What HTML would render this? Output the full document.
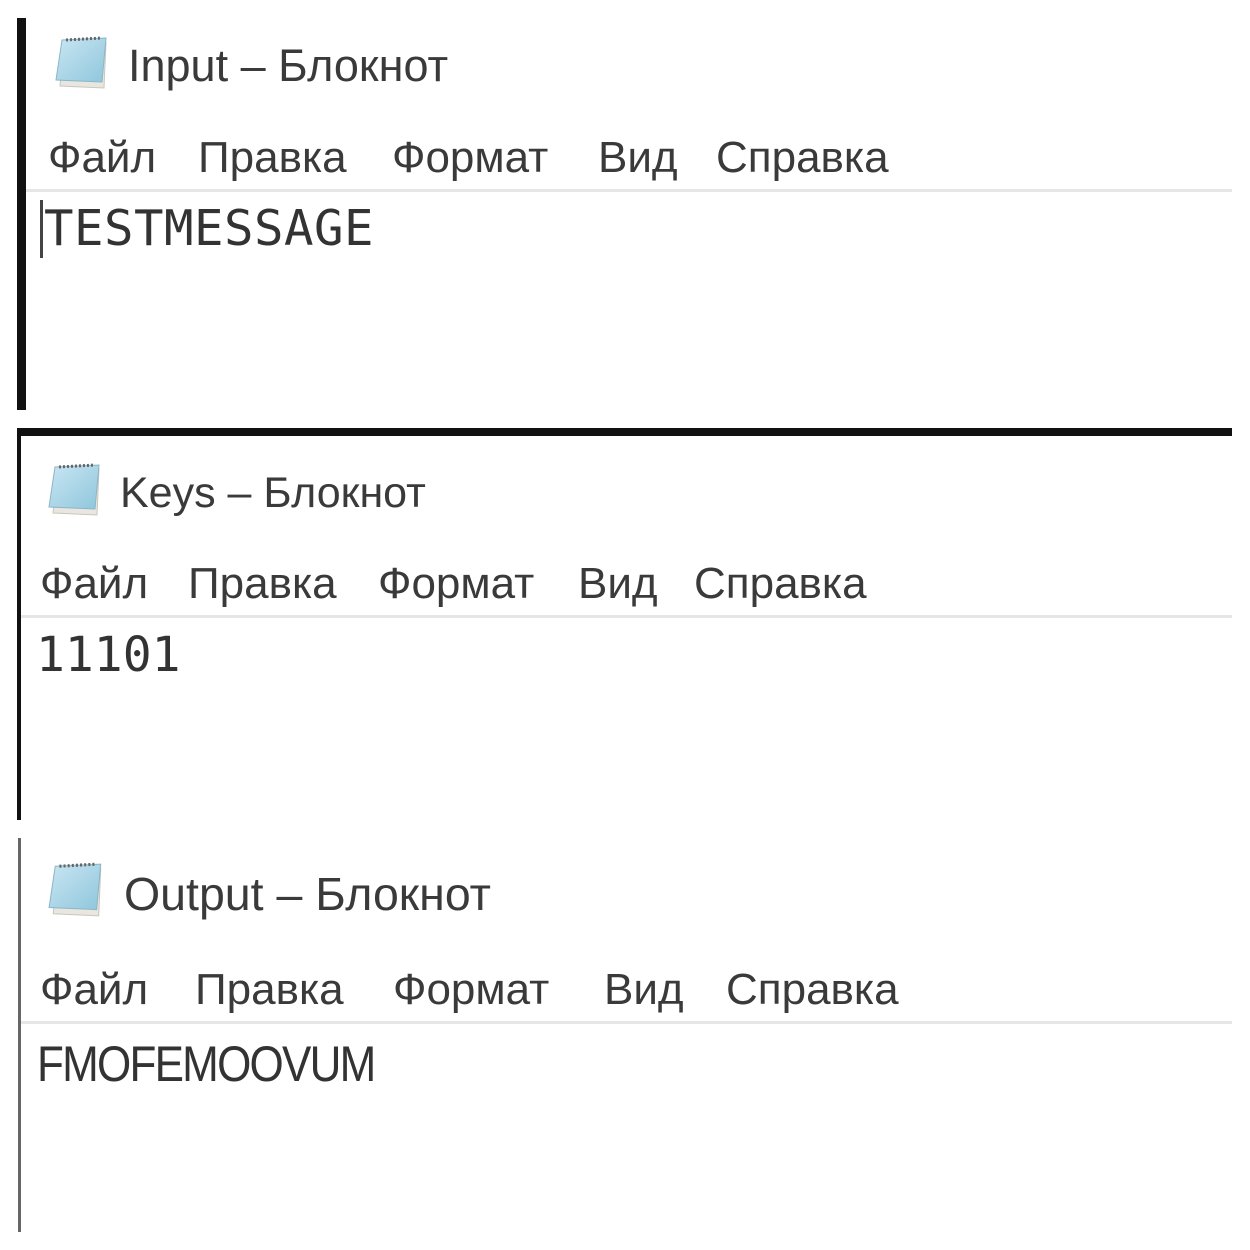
<!DOCTYPE html>
<html><head><meta charset="utf-8"><style>
html,body{margin:0;padding:0;width:1250px;height:1250px;background:#fff;overflow:hidden;position:relative;font-family:"Liberation Sans","DejaVu Sans",sans-serif;color:#3a3a3a}
.a{position:absolute;white-space:nowrap}
.t{font-size:45px;line-height:1}
.m{font-size:44px;line-height:1}
.mono{font-family:"DejaVu Sans Mono","Liberation Mono",monospace;font-size:49px;line-height:1;color:#333}
.line{position:absolute;height:3px;background:#e6e6e6}
.ic{position:absolute}
</style></head><body>
<svg width="0" height="0" style="position:absolute"><defs>
<linearGradient id="g" x1="0" y1="0" x2="1" y2="1"><stop offset="0" stop-color="#c9e6f3"/><stop offset="1" stop-color="#8fc6dc"/></linearGradient></defs></svg>

<!-- Panel 1 -->
<div class="a" style="left:17px;top:18px;width:9px;height:392px;background:#111"></div>
<svg class="ic" style="left:54px;top:34px" width="60" height="58" viewBox="0 0 60 58">
<path d="M6 52 L10 10 L52 8 L50 54 Z" fill="#e8e6df" stroke="#c9c6bd"/>
<path d="M2 46 L8 6 L52 4 L48 48 Z" fill="url(#g)" stroke="#8bb6c8"/>
<path d="M12 6 L48 4" stroke="#666" stroke-width="3" stroke-dasharray="2 2"/>
</svg>
<div class="a t" style="left:128px;top:43px">Input – Блокнот</div>
<div class="a m" style="left:48px;top:136px">Файл</div>
<div class="a m" style="left:198px;top:136px">Правка</div>
<div class="a m" style="left:392px;top:136px">Формат</div>
<div class="a m" style="left:598px;top:136px">Вид</div>
<div class="a m" style="left:716px;top:136px">Справка</div>
<div class="line" style="left:26px;top:189px;width:1206px"></div>
<div class="a" style="left:40px;top:200px;width:3px;height:58px;background:#444"></div>
<div class="a mono" style="left:44px;top:204px;letter-spacing:0.5px">TESTMESSAGE</div>

<!-- Panel 2 -->
<div class="a" style="left:17px;top:428px;width:1215px;height:8px;background:#111"></div>
<div class="a" style="left:17px;top:436px;width:4px;height:384px;background:#111"></div>
<svg class="ic" style="left:47px;top:461px" width="60" height="58" viewBox="0 0 60 58">
<path d="M6 52 L10 10 L52 8 L50 54 Z" fill="#e8e6df" stroke="#c9c6bd"/>
<path d="M2 46 L8 6 L52 4 L48 48 Z" fill="url(#g)" stroke="#8bb6c8"/>
<path d="M12 6 L48 4" stroke="#666" stroke-width="3" stroke-dasharray="2 2"/>
</svg>
<div class="a t" style="left:120px;top:472px;font-size:43px">Keys – Блокнот</div>
<div class="a m" style="left:40px;top:562px">Файл</div>
<div class="a m" style="left:188px;top:562px">Правка</div>
<div class="a m" style="left:378px;top:562px">Формат</div>
<div class="a m" style="left:578px;top:562px">Вид</div>
<div class="a m" style="left:694px;top:562px">Справка</div>
<div class="line" style="left:21px;top:615px;width:1211px"></div>
<div class="a mono" style="left:36px;top:631px;font-size:48px">11101</div>

<!-- Panel 3 -->
<div class="a" style="left:18px;top:838px;width:3px;height:394px;background:#666"></div>
<svg class="ic" style="left:47px;top:859px" width="62" height="62" viewBox="0 0 60 58">
<path d="M6 52 L10 10 L52 8 L50 54 Z" fill="#e8e6df" stroke="#c9c6bd"/>
<path d="M2 46 L8 6 L52 4 L48 48 Z" fill="url(#g)" stroke="#8bb6c8"/>
<path d="M12 6 L48 4" stroke="#666" stroke-width="3" stroke-dasharray="2 2"/>
</svg>
<div class="a t" style="left:124px;top:871px;font-size:46.5px">Output – Блокнот</div>
<div class="a m" style="left:40px;top:968px">Файл</div>
<div class="a m" style="left:195px;top:968px">Правка</div>
<div class="a m" style="left:393px;top:968px">Формат</div>
<div class="a m" style="left:604px;top:968px">Вид</div>
<div class="a m" style="left:726px;top:968px">Справка</div>
<div class="line" style="left:21px;top:1021px;width:1211px"></div>
<div class="a" style="left:37px;top:1039px;font-size:50px;line-height:1;color:#333;letter-spacing:-2px;transform:scaleX(0.88);transform-origin:0 0">FMOFEMOOVUM</div>
</body></html>
